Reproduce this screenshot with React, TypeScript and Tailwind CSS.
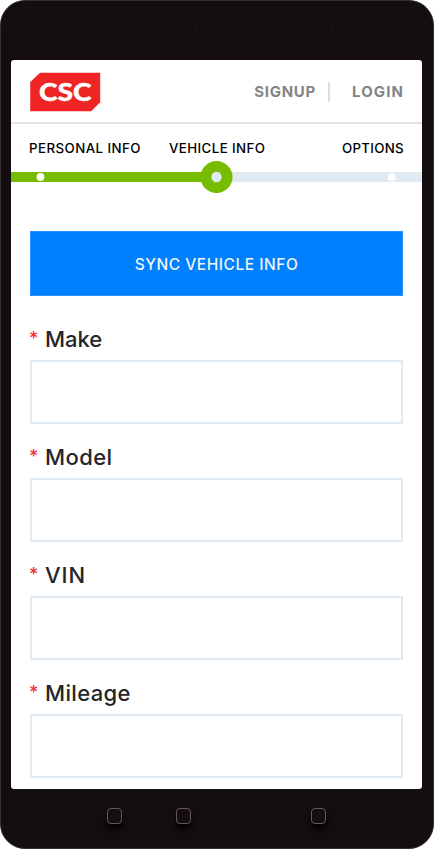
const fields = [
  { name: "Make", spacing: "tracking-[-0.05px]" },
  { name: "Model", spacing: "tracking-[0.4px]" },
  { name: "VIN", spacing: "tracking-[0.9px]" },
  { name: "Mileage", spacing: "tracking-[0.35px]" },
];

function Logo() {
  return (
    <svg width="71" height="40" viewBox="0 0 71 40" className="mt-3 block" aria-label="CSC">
      <path d="M10 0.7H70.2V30.2L61.2 39.2H0.2V10Z" fill="#ee2524" />
      <text x="9" y="29.2" fontFamily="Lato, sans-serif" fontWeight="900" fontSize="25.5" textLength="52.5" lengthAdjust="spacingAndGlyphs" fill="#fff" stroke="#fff" strokeWidth="0.4">CSC</text>
    </svg>
  );
}

function Progress() {
  return (
    <svg width="411" height="34" viewBox="0 0 411 34" className="block">
      <path d="M205 12H411V22H205Z" fill="#e0eaf0" />
      <path d="M0 12H205V22H0Z" fill="#76bc00" />
      <circle cx="205.5" cy="17" r="16" fill="#76bc00" />
      <circle cx="205.5" cy="17" r="5.2" fill="#e0eaf0" />
      <circle cx="29.5" cy="17" r="3.9" fill="#fff" />
      <circle cx="380.7" cy="17" r="3.9" fill="#fff" />
    </svg>
  );
}

function Key() {
  return <span className="block h-4 w-[15px] rounded-[4px] border border-[#65585a] shadow-[0_5px_6px_#000]" />;
}

function Lens() {
  return <span className="block h-1 w-1 rounded-full bg-[#14122b]" />;
}

export default function App() {
  return (
    <div className="h-[850px] w-[434px] overflow-hidden bg-white font-['Inter',sans-serif]">
      <div className="flex h-[849px] w-[434px] flex-col rounded-[25px] border border-[#34302f] bg-[#140e10]">
        <div className="flex h-[59px] shrink-0 pt-6 pl-[125px]">
          <Lens />
          <span className="w-16" />
          <Lens />
          <span className="w-[132px]" />
          <Lens />
        </div>
        <main className="ml-2.5 h-[729px] w-[411px] shrink-0 overflow-hidden rounded-[3px] bg-white">
          <header className="flex h-16 border-b-2 border-[#e2e2e2] pl-[19px] pr-[17px]">
            <Logo />
            <nav className="ml-auto flex h-16 items-center text-[15px] font-bold text-[#858585]">
              <a className="tracking-[0.7px]">SIGNUP</a>
              <span className="ml-3 mr-[22px] h-5 w-0.5 bg-[#dedede]" />
              <a className="pr-px tracking-[1.1px]">LOGIN</a>
            </nav>
          </header>
          <div className="flex h-[36px] pt-[14px] pl-[18px] text-[13.3px] leading-5 font-medium whitespace-nowrap text-black">
            <span className="w-[140px] tracking-[0.44px]">PERSONAL INFO</span>
            <span className="w-[173px] tracking-[0.4px]">VEHICLE INFO</span>
            <span className="tracking-[0.3px]">OPTIONS</span>
          </div>
          <Progress />
          <button className="mt-[37px] ml-[19px] flex h-[65px] w-[373px] items-center justify-center border border-[#2b8ffb] bg-[#007fff] pt-0.5 text-[15.5px] font-medium tracking-[0.53px] text-[#edf6f5]">
            SYNC VEHICLE INFO
          </button>
          <form className="ml-[19px] w-[373px] pt-[26px]">
            {fields.map(({ name, spacing }) => (
              <label key={name} className="block h-[118px]">
                <span className="flex h-[38px] pt-[3px] text-[22px] leading-7 font-medium text-[#252627]">
                  <span className="-ml-px w-4 text-[18px] font-medium text-[#f03232]">*</span>
                  <span className={spacing}>{name}</span>
                </span>
                <input aria-label={name} className="block h-16 w-full rounded-none border-2 border-[#e0ecf2] bg-white px-3 text-lg outline-none" />
              </label>
            ))}
          </form>
        </main>
        <div className="flex pt-[19px] pl-[106px]">
          <Key />
          <span className="w-[54px]" />
          <Key />
          <span className="w-[120px]" />
          <Key />
        </div>
      </div>
    </div>
  );
}
